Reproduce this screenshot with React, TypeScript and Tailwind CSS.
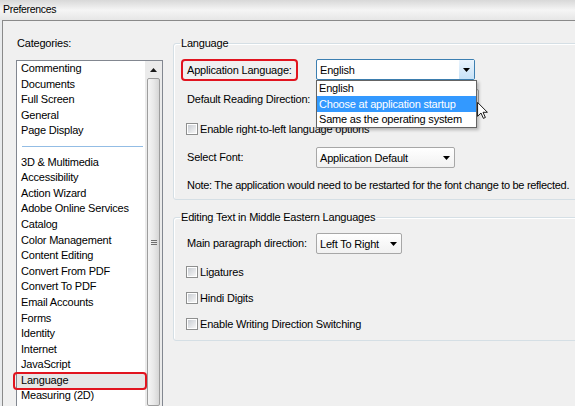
import React from "react";

const DownArrow = () => (
  <svg width="7" height="4" viewBox="0 0 7 4">
    <path d="M0 0H7L3.5 4Z" fill="#000" />
  </svg>
);

function Combo({
  text,
  className,
  focused,
  children,
}: {
  text: string;
  className: string;
  focused?: boolean;
  children?: React.ReactNode;
}) {
  return (
    <div
      className={
        "relative flex h-[21px] shrink-0 items-center rounded-[2px] border " +
        (focused
          ? "border-[#3c7fb1] bg-white "
          : "border-[#a7a7a7] bg-gradient-to-b from-white to-[#f1f1f1] ") +
        className
      }
    >
      <span className="flex-1 overflow-hidden whitespace-nowrap pl-[3px] leading-[16px]">{text}</span>
      <div
        className={
          "flex h-full w-[15px] items-center justify-center " +
          (focused ? "bg-gradient-to-b from-[#eaf4fd] to-[#c7e2f7]" : "")
        }
      >
        <DownArrow />
      </div>
      {children}
    </div>
  );
}

function Checkbox({ label }: { label: string }) {
  return (
    <div className="flex h-[16px] items-center gap-[2px]">
      <div className="-ml-[1px] h-[12px] w-[12px] shrink-0 border border-[#8e8f8f] bg-white p-[1px]">
        <div className="h-full w-full bg-gradient-to-br from-[#c9cdd3] to-[#f7f7f7]" />
      </div>
      <span className="whitespace-nowrap leading-[16px]">{label}</span>
    </div>
  );
}

const topItems = ["Commenting", "Documents", "Full Screen", "General", "Page Display"];
const restItems = [
  "3D & Multimedia",
  "Accessibility",
  "Action Wizard",
  "Adobe Online Services",
  "Catalog",
  "Color Management",
  "Content Editing",
  "Convert From PDF",
  "Convert To PDF",
  "Email Accounts",
  "Forms",
  "Identity",
  "Internet",
  "JavaScript",
  "Language",
  "Measuring (2D)",
];

export default function App() {
  return (
    <div className="relative flex h-[406px] w-[575px] flex-col overflow-hidden bg-[#e9ebed] font-['Liberation_Sans',Arial,sans-serif] text-[11px] tracking-[-0.2px] text-black">
      {/* Title bar */}
      <div className="flex h-[20px] shrink-0 items-center bg-gradient-to-b from-[#d8d8d8] via-[#f5f5f5] to-[#e6e6e6] pl-[3px] text-[10.5px] tracking-[-0.3px]">
        Preferences
      </div>

      {/* Body */}
      <div className="ml-[2px] flex flex-1 border-l border-t border-[#8a8a8a] bg-[#f0f0f0]">
        {/* Left column */}
        <div className="flex w-[160px] shrink-0 flex-col pl-[13px] pt-[14px]">
          <div className="pl-[1px] leading-[16px]">Categories:</div>
          <div className="mt-[9px] flex h-[400px] w-[147px] border border-[#828790] bg-white">
            <div className="flex flex-1 flex-col">
              {topItems.map((t) => (
                <div key={t} className="h-[15.6px] whitespace-nowrap pl-[4px] leading-[15.6px]">
                  {t}
                </div>
              ))}
              <div className="flex h-[15.6px] items-center pl-[5px] pr-[2px]">
                <div className="h-px w-full bg-[#93bde5]" />
              </div>
              {restItems.map((t) =>
                t === "Language" ? (
                  <div key={t} className="relative h-[15.6px] whitespace-nowrap bg-[#e6e6e6] pl-[4px] leading-[15.6px]">
                    {t}
                    <div className="absolute -bottom-[2px] -left-[4px] -right-[2px] -top-[1px] z-10 rounded-[4px] border-2 border-[#e1141f]" />
                  </div>
                ) : (
                  <div key={t} className="h-[15.6px] whitespace-nowrap pl-[4px] leading-[15.6px]">
                    {t}
                  </div>
                )
              )}
            </div>
            {/* Scrollbar */}
            <div className="flex w-[17px] shrink-0 flex-col items-center bg-[#ebebeb]">
              <div className="flex h-[17px] w-full items-center justify-center">
                <svg width="7" height="4" viewBox="0 0 7 4">
                  <path d="M0 4H7L3.5 0Z" fill="#1a1a1a" />
                </svg>
              </div>
              <div className="flex h-[328px] w-[13px] flex-col items-center justify-center gap-[1px] rounded-[2px] border border-[#9d9d9d] bg-gradient-to-r from-[#f5f5f5] via-[#e9e9e9] to-[#d6d6d6]">
                <div className="h-px w-[6px] bg-[#6f6f6f]" />
                <div className="h-px w-[6px] bg-[#6f6f6f]" />
                <div className="h-px w-[6px] bg-[#6f6f6f]" />
              </div>
            </div>
          </div>
        </div>

        {/* Right column */}
        <div className="flex flex-1 flex-col pl-[10px] pt-[14px]">
          <fieldset className="w-[430px] shrink-0 rounded-[3px] border border-[#d5dfe5] p-0 shadow-[inset_1px_1px_0_#ffffff]">
            <legend className="ml-[6px] px-[1px] leading-[16px]">Language</legend>
            <div className="flex flex-col pb-[6px] pl-[13px] pt-[8px]">
              <div className="flex h-[22px] items-start">
                <div className="w-[129px] shrink-0">
                  <span className="-ml-[6px] inline-block h-[22px] whitespace-nowrap rounded-[4px] border-2 border-[#e1141f] px-[4px] leading-[18px]">
                    Application Language:
                  </span>
                </div>
                <Combo text="English" focused className="w-[159px]">
                  <div className="absolute -left-[1px] top-[20px] z-20 flex w-[161px] flex-col border border-[#646464] bg-white shadow-[2px_2px_3px_rgba(0,0,0,0.25)]">
                    <div className="h-[15px] whitespace-nowrap pl-[2px] leading-[15px]">English</div>
                    <div className="h-[16px] whitespace-nowrap bg-[#3399ff] pl-[2px] leading-[16px] text-white">
                      Choose at application startup
                    </div>
                    <div className="h-[15px] whitespace-nowrap pl-[2px] leading-[15px]">Same as the operating system</div>
                  </div>
                </Combo>
              </div>
              <div className="mt-[8px] flex h-[21px] items-center">
                <div className="w-[129px] shrink-0 whitespace-nowrap">Default Reading Direction:</div>
                <Combo text="" className="w-[163px]" />
              </div>
              <div className="mt-[11px]">
                <Checkbox label="Enable right-to-left language options" />
              </div>
              <div className="mt-[10px] flex h-[21px] items-center">
                <div className="w-[129px] shrink-0 whitespace-nowrap">Select Font:</div>
                <Combo text="Application Default" className="w-[139px]" />
              </div>
              <div className="mt-[9px] h-[16px] whitespace-nowrap leading-[16px] tracking-[-0.3px]">
                Note: The application would need to be restarted for the font change to be reflected.
              </div>
            </div>
          </fieldset>

          <fieldset className="mt-[9px] w-[430px] shrink-0 rounded-[3px] border border-[#d5dfe5] p-0 shadow-[inset_1px_1px_0_#ffffff]">
            <legend className="ml-[6px] px-[1px] leading-[16px]">Editing Text in Middle Eastern Languages</legend>
            <div className="flex flex-col pb-[8px] pl-[13px] pt-[8px]">
              <div className="flex h-[21px] items-center">
                <div className="w-[129px] shrink-0 whitespace-nowrap">Main paragraph direction:</div>
                <Combo text="Left To Right" className="w-[86px]" />
              </div>
              <div className="mt-[10px]">
                <Checkbox label="Ligatures" />
              </div>
              <div className="mt-[10px]">
                <Checkbox label="Hindi Digits" />
              </div>
              <div className="mt-[10px]">
                <Checkbox label="Enable Writing Direction Switching" />
              </div>
            </div>
          </fieldset>
        </div>
      </div>

      {/* Mouse cursor */}
      <svg className="absolute left-[477px] top-[102px] z-30" width="11" height="17" viewBox="0 0 12 19">
        <path
          d="M0.5 0.5V16L4.3 12.3L7 18.3L9.2 17.3L6.6 11.5H11.5Z"
          fill="#ffffff"
          stroke="#000000"
          strokeWidth="1"
          strokeLinejoin="round"
        />
      </svg>
    </div>
  );
}
